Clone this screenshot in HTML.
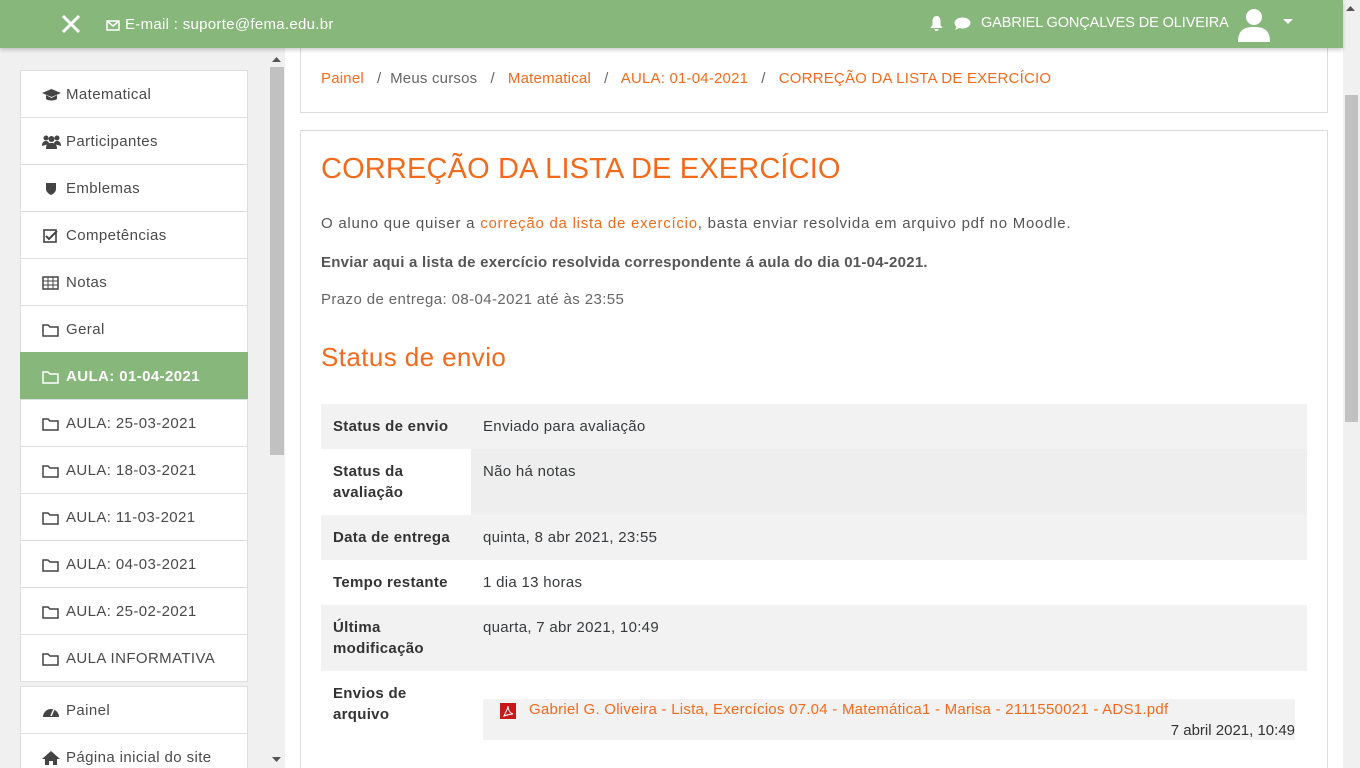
<!DOCTYPE html>
<html><head><meta charset="utf-8"><style>
*{margin:0;padding:0;box-sizing:border-box}
html,body{width:1360px;height:768px;overflow:hidden}
body{background:#fff;font-family:"Liberation Sans",sans-serif;color:#373a3c;position:relative}
.hdr{position:absolute;left:0;top:0;width:1343px;height:48px;background:#87b77a;color:#fff;box-shadow:0 2px 4px rgba(0,0,0,.2);z-index:5}
.side{position:absolute;left:0;top:48px;width:285px;height:720px;background:#f0f0f0}
.item{position:absolute;left:20px;width:228px;height:48px;background:#fff;border:1px solid #dedede;font-size:15px;letter-spacing:.4px;color:#4a4a4a;padding:15px 0 0 45px}
.item svg{position:absolute;left:21px;top:17px}
.item.act{background:#87b77a;color:#fff;font-weight:bold;border-color:#87b77a}
.card{position:absolute;background:#fff;border:1px solid #dcdcdc}
.o{color:#f26a1b}
.sb{position:absolute;background:#c1c1c1}
table{position:absolute;left:321px;top:404px;width:986px;border-collapse:collapse;font-size:15px;letter-spacing:.3px}
td{vertical-align:top;padding:12px 12px;line-height:21px}
td.l{width:150px;font-weight:bold;color:#333}
tr.g td{background:#f2f2f2}
</style></head><body>
<div class="hdr">
 <svg style="position:absolute;left:61px;top:14px" width="20" height="20" viewBox="0 0 20 20"><path d="M2 2L18 18M18 2L2 18" stroke="#fff" stroke-width="3"/></svg>
 <svg style="position:absolute;left:106px;top:20px" width="14" height="11" viewBox="0 0 14 11"><rect x="1" y="1" width="12" height="9" fill="none" stroke="#fff" stroke-width="1.5"/><path d="M1 1L7 6L13 1" fill="none" stroke="#fff" stroke-width="1.5"/></svg>
 <div style="position:absolute;left:125px;top:16px;font-size:15px;letter-spacing:.3px">E-mail : suporte@fema.edu.br</div>
 <svg style="position:absolute;left:929px;top:15px" width="15" height="16" viewBox="0 0 15 16"><path d="M7.5 1C4.5 1 3.5 4 3.5 6V10L1.5 13H13.5L11.5 10V6C11.5 4 10.5 1 7.5 1ZM5.5 14A2 2 0 0 0 9.5 14Z" fill="#fff"/></svg>
 <svg style="position:absolute;left:954px;top:17px" width="17" height="14" viewBox="0 0 17 14"><ellipse cx="8.5" cy="6" rx="8" ry="5.5" fill="#fff"/><path d="M3 9L1 13L7 10Z" fill="#fff"/></svg>
 <div style="position:absolute;left:981px;top:15px;font-size:14.5px;letter-spacing:-.1px">GABRIEL GONÇALVES DE OLIVEIRA</div>
 <svg style="position:absolute;left:1236px;top:6px" width="36" height="36" viewBox="0 0 36 36"><circle cx="18" cy="11" r="8" fill="#fff"/><path d="M2 36C2 24 8 21 18 21S34 24 34 36Z" fill="#fff"/></svg>
 <svg style="position:absolute;left:1283px;top:19px" width="10" height="6"><path d="M0 0H10L5 5Z" fill="#fff"/></svg>
</div>
<div class="side">
 <div class="sb" style="left:270px;top:19px;width:14px;height:388px"></div>
 <svg style="position:absolute;left:272px;top:9px" width="10" height="6"><path d="M0 5H9L4.5 0Z" fill="#555"/></svg>
 <svg style="position:absolute;left:272px;top:709px" width="10" height="6"><path d="M0 0H9L4.5 5Z" fill="#555"/></svg>
</div>
<div class="item" style="top:70px"><svg width="19" height="14" viewBox="0 0 19 14"><path d="M9.5 1L19 5L9.5 9L0 5Z M4 7V11C6 13 13 13 15 11V7L9.5 10Z" fill="#444"/></svg>Matematical</div>
<div class="item" style="top:117px"><svg width="19" height="14" viewBox="0 0 19 14"><circle cx="4" cy="3" r="2.5" fill="#444"/><circle cx="15" cy="3" r="2.5" fill="#444"/><circle cx="9.5" cy="4" r="3" fill="#444"/><path d="M0 11C0 7 2 6 4 6S7 7 7 9ZM12 9C12 7 13 6 15 6S19 7 19 11ZM4 14C4 9 6 8 9.5 8S15 9 15 14Z" fill="#444"/></svg>Participantes</div>
<div class="item" style="top:164px"><svg width="19" height="14" viewBox="0 0 19 14"><path d="M4 1H14V7C14 10 11 12 9 13C7 12 4 10 4 7Z" fill="#444"/></svg>Emblemas</div>
<div class="item" style="top:211px"><svg width="19" height="14" viewBox="0 0 19 14"><rect x="2" y="1" width="12" height="12" fill="none" stroke="#444" stroke-width="1.6"/><path d="M4 7L7 10L15 2" fill="none" stroke="#444" stroke-width="2"/></svg>Competências</div>
<div class="item" style="top:258px"><svg width="19" height="14" viewBox="0 0 19 14"><rect x="1" y="1" width="15" height="12" fill="none" stroke="#444" stroke-width="1.5"/><path d="M1 5H16M1 9H16M6 1V13M11 1V13" stroke="#444"/></svg>Notas</div>
<div class="item" style="top:305px"><svg width="19" height="14" viewBox="0 0 19 14"><path d="M1 2H6L8 4H16V13H1Z" fill="none" stroke="#444" stroke-width="1.5"/></svg>Geral</div>
<div class="item act" style="top:352px"><svg width="19" height="14" viewBox="0 0 19 14"><path d="M1 2H6L8 4H16V13H1Z" fill="none" stroke="#fff" stroke-width="1.5"/></svg>AULA: 01-04-2021</div>
<div class="item" style="top:399px"><svg width="19" height="14" viewBox="0 0 19 14"><path d="M1 2H6L8 4H16V13H1Z" fill="none" stroke="#444" stroke-width="1.5"/></svg>AULA: 25-03-2021</div>
<div class="item" style="top:446px"><svg width="19" height="14" viewBox="0 0 19 14"><path d="M1 2H6L8 4H16V13H1Z" fill="none" stroke="#444" stroke-width="1.5"/></svg>AULA: 18-03-2021</div>
<div class="item" style="top:493px"><svg width="19" height="14" viewBox="0 0 19 14"><path d="M1 2H6L8 4H16V13H1Z" fill="none" stroke="#444" stroke-width="1.5"/></svg>AULA: 11-03-2021</div>
<div class="item" style="top:540px"><svg width="19" height="14" viewBox="0 0 19 14"><path d="M1 2H6L8 4H16V13H1Z" fill="none" stroke="#444" stroke-width="1.5"/></svg>AULA: 04-03-2021</div>
<div class="item" style="top:587px"><svg width="19" height="14" viewBox="0 0 19 14"><path d="M1 2H6L8 4H16V13H1Z" fill="none" stroke="#444" stroke-width="1.5"/></svg>AULA: 25-02-2021</div>
<div class="item" style="top:634px"><svg width="19" height="14" viewBox="0 0 19 14"><path d="M1 2H6L8 4H16V13H1Z" fill="none" stroke="#444" stroke-width="1.5"/></svg>AULA INFORMATIVA</div>
<div class="item" style="top:686px"><svg width="19" height="14" viewBox="0 0 19 14"><path d="M1 13A8 8 0 1 1 17 13Z" fill="#444"/><path d="M9 12L12 5" stroke="#fff" stroke-width="1.5"/></svg>Painel</div>
<div class="item" style="top:733px"><svg width="19" height="14" viewBox="0 0 19 14"><path d="M9 0L18 8H15V14H11V10H7V14H3V8H0Z" fill="#444"/></svg>Página inicial do site</div>

<div class="card" style="left:300px;top:40px;width:1028px;height:73px"></div>
<div style="position:absolute;left:321px;top:70px;font-size:15px;letter-spacing:.2px;color:#666;white-space:pre"><span class="o">Painel</span>   /  Meus cursos   /   <span class="o">Matematical</span>   /   <span class="o">AULA: 01-04-2021</span>   /   <span class="o">CORREÇÃO DA LISTA DE EXERCÍCIO</span></div>

<div class="card" style="left:300px;top:130px;width:1028px;height:660px"></div>
<div class="o" style="position:absolute;left:321px;top:153px;font-size:29px;letter-spacing:.15px">CORREÇÃO DA LISTA DE EXERCÍCIO</div>
<div style="position:absolute;left:321px;top:215px;font-size:15px;letter-spacing:.75px;color:#555">O aluno que quiser a <span class="o">correção da lista de exercício</span>, basta enviar resolvida em arquivo pdf no Moodle.</div>
<div style="position:absolute;left:321px;top:254px;font-size:15px;font-weight:bold;letter-spacing:.25px;color:#555">Enviar aqui a lista de exercício resolvida correspondente á aula do dia 01-04-2021.</div>
<div style="position:absolute;left:321px;top:291px;font-size:15px;letter-spacing:.4px;color:#666">Prazo de entrega: 08-04-2021 até às 23:55</div>
<div class="o" style="position:absolute;left:321px;top:342px;font-size:26px;letter-spacing:.4px">Status de envio</div>
<table>
<tr class="g" style="height:45px"><td class="l">Status de envio</td><td>Enviado para avaliação</td></tr>
<tr style="height:66px"><td class="l">Status da avaliação</td><td style="background:#eee">Não há notas</td></tr>
<tr class="g" style="height:45px"><td class="l">Data de entrega</td><td>quinta, 8 abr 2021, 23:55</td></tr>
<tr style="height:45px"><td class="l">Tempo restante</td><td>1 dia 13 horas</td></tr>
<tr class="g" style="height:66px"><td class="l">Última modificação</td><td>quarta, 7 abr 2021, 10:49</td></tr>
<tr style="height:80px"><td class="l">Envios de arquivo</td><td></td></tr>
</table>
<div style="position:absolute;left:483px;top:699px;width:812px;height:41px;background:#f2f2f2;font-size:15px">
 <svg style="position:absolute;left:17px;top:4px" width="16" height="16" viewBox="0 0 16 16"><rect width="16" height="16" fill="#c8191a"/><path d="M4 13C6 9 8 5 8 3C8 7 10 10 13 11C10 11 7 12 4 13Z" fill="none" stroke="#fff" stroke-width="1"/></svg>
 <div class="o" style="position:absolute;left:46px;top:2px;letter-spacing:.25px">Gabriel G. Oliveira - Lista, Exercícios 07.04 - Matemática1 - Marisa - 2111550021 - ADS1.pdf</div>
 <div style="position:absolute;right:0;top:23px;color:#333">7 abril 2021, 10:49</div>
</div>
<div style="position:absolute;left:1343px;top:0;width:17px;height:768px;background:#f0f0f0"></div>
<div class="sb" style="left:1345px;top:95px;width:13px;height:327px"></div>
<svg style="position:absolute;left:1346px;top:6px" width="10" height="6"><path d="M0 5H9L4.5 0Z" fill="#555"/></svg>
</body></html>
